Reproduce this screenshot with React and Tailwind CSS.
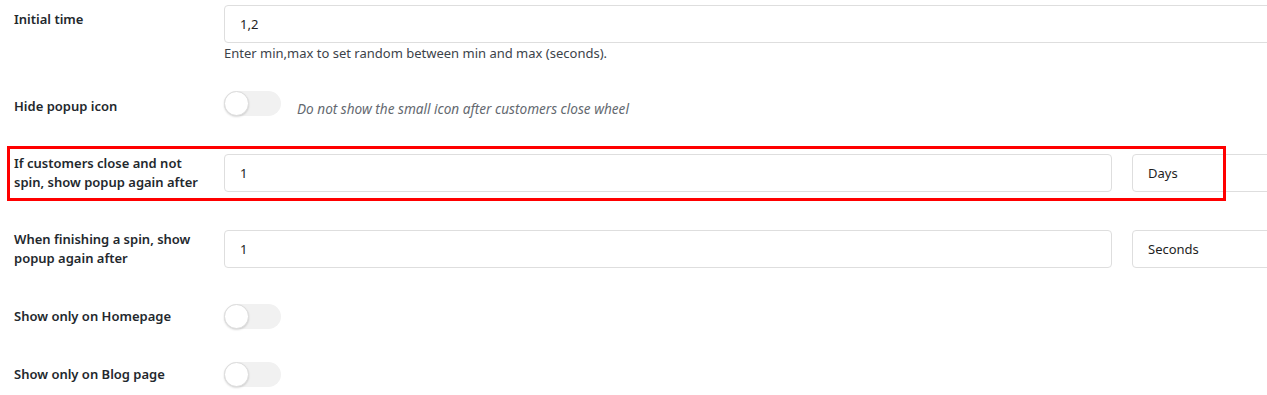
import React from 'react'

const FONT = "font-['Segoe_UI','Noto_Sans','Open_Sans',sans-serif]"

function Toggle() {
  return (
    <div className="relative w-[57px] h-[25px] rounded-full bg-[#f1f1f1] shrink-0">
      <span className="absolute left-0 top-0 w-[25px] h-[25px] rounded-full bg-white border border-[#dcdcdc] shadow-[0_1px_2px_rgba(0,0,0,0.15)]" />
    </div>
  )
}

function TextInput({ value, className = '' }) {
  return (
    <div className={`h-[38px] border border-[#dedede] rounded-[4px] bg-white flex items-center pl-[15px] pt-[2px] text-[13px] text-[#1e1e1e] ${className}`}>
      {value}
    </div>
  )
}

function Label({ children, className = '' }) {
  return (
    <div className={`w-[210px] shrink-0 pr-[14px] text-[13px] leading-[19px] font-semibold text-[#23282d] ${className}`}>
      {children}
    </div>
  )
}

export default function App() {
  return (
    <div className={`${FONT} w-[1267px] h-[395px] overflow-hidden bg-white`}>
      <div className="pl-[14px]">
        {/* Initial time */}
        <div className="flex pt-[5px]">
          <Label className="pt-[5px]">Initial time</Label>
          <div className="flex-1">
            <TextInput value="1,2" className="w-[1100px]" />
            <div className="text-[13px] leading-[18px] mt-[1px] text-[#3c434a]">
              Enter min,max to set random between min and max (seconds).
            </div>
          </div>
        </div>

        {/* Hide popup icon */}
        <div className="flex items-start mt-[29px]">
          <Label className="mt-[6px]">Hide popup icon</Label>
          <div className="flex items-start">
            <Toggle />
            <span className="ml-[16px] mt-[8px] leading-[19px] text-[13.6px] italic text-[#646970]">
              Do not show the small icon after customers close wheel
            </span>
          </div>
        </div>

        {/* Close and not spin */}
        <div className="relative flex mt-[36px]">
          <Label>If customers close and not spin, show popup again after</Label>
          <div className="flex gap-[20px]">
            <TextInput value="1" className="w-[888px]" />
            <TextInput value="Days" className="w-[300px]" />
          </div>
          <div className="absolute left-[-7px] top-[-8px] w-[1219px] h-[55px] border-[3px] border-[#ff0000] pointer-events-none" />
        </div>

        {/* Finishing a spin */}
        <div className="flex mt-[38px]">
          <Label>When finishing a spin, show popup again after</Label>
          <div className="flex gap-[20px]">
            <TextInput value="1" className="w-[888px]" />
            <TextInput value="Seconds" className="w-[300px]" />
          </div>
        </div>

        {/* Homepage */}
        <div className="flex items-center mt-[36px]">
          <Label>Show only on Homepage</Label>
          <Toggle />
        </div>

        {/* Blog page */}
        <div className="flex items-center mt-[33px]">
          <Label>Show only on Blog page</Label>
          <Toggle />
        </div>
      </div>
    </div>
  )
}
